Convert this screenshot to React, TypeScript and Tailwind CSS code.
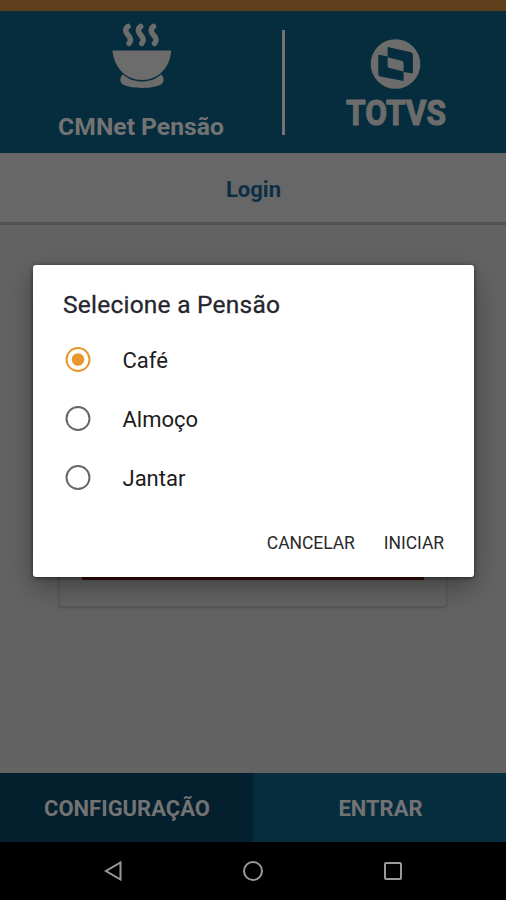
import { useState } from 'react'

const meals = ['Café', 'Almoço', 'Jantar']

const BowlIcon = () => (
  <svg width="60" height="68" viewBox="0 0 60 68" fill="#6c6c6c">
    <g fill="none" stroke="#6c6c6c" strokeWidth="5.500" strokeLinecap="round" strokeLinejoin="round">
      <path d="M16 3.500C12.500 6 13.500 9.500 16 12S19.500 17.500 17 20.500" />
      <path d="M28.700 3.500C25.200 6 26.200 9.500 28.700 12S32.200 17.500 29.700 20.500" />
      <path d="M41.500 3.500C38 6 39 9.500 41.500 12S45 17.500 42.500 20.500" />
    </g>
    <path d="M0.500 27.500H59.200C58 45 46 57 30 57S2 45 0.500 27.500Z" />
    <path d="M11 51.500C17 56.500 23 58.500 30 58.500S43 56.500 49 51.500C52.500 54 52.500 59.500 49 61.500C41 66 19 66 11 61.500C7.500 59.500 7.500 54 11 51.500Z" />
  </svg>
)

const TotvsLogo = () => (
  <svg width="110" height="94" viewBox="0 0 110 94" fill="#6c6c6c" className="overflow-visible">
    <circle cx="54.500" cy="25" r="24.800" />
    <g fill="#062d3e">
      <path d="M46.600 8L70 13.300Q71.900 13.800 71.900 15.800V34.600L62.600 33V24.200Q62.600 22.200 60.600 21.700L46.600 18.300Z" />
      <path d="M37.300 15.800L46.600 17.300V26.500Q46.600 28.500 48.600 29L62.600 32.500V42L39.300 37.500Q37.300 37 37.300 35Z" />
    </g>
    <text
      x="5"
      y="86"
      textLength="100"
      lengthAdjust="spacingAndGlyphs"
      stroke="#6c6c6c"
      strokeWidth="1.200"
      strokeLinejoin="round"
      className="font-[Roboto,sans-serif] text-[35px] leading-none font-bold"
    >
      TOTVS
    </text>
  </svg>
)

const Header = () => (
  <header className="box-content flex h-[142px] border-t-[11px] border-[#5f3f1b] bg-[#062d3e]">
    <div className="flex w-[282px] flex-col items-center pt-[12px]">
      <div className="pl-[2px]">
        <BowlIcon />
      </div>
      <h1 className="mt-[22px] text-[24.700px] leading-7 font-bold">CMNet Pensão</h1>
    </div>
    <div className="mt-[19px] h-[105px] w-[3px] bg-[#737373]" />
    <div className="flex flex-1 justify-center pt-[28px]">
      <TotvsLogo />
    </div>
  </header>
)

const NavBar = () => (
  <nav className="flex h-[58px] items-center bg-black">
    <div className="flex w-full justify-center gap-[112px]">
      <svg width="28" height="28" fill="none" stroke="#999999" strokeWidth="2">
        <path d="M21.500 5.500V22.500L7 14Z" />
      </svg>
      <svg width="28" height="28" fill="none" stroke="#999999" strokeWidth="2">
        <circle cx="14" cy="14" r="9" />
      </svg>
      <svg width="28" height="28" fill="none" stroke="#999999" strokeWidth="2">
        <rect x="6" y="6" width="16" height="16" rx="1" />
      </svg>
    </div>
  </nav>
)

const MealDialog = () => {
  const [selected, setSelected] = useState('Café')

  return (
    <div className="absolute top-[265px] left-[33px] flex h-[312px] w-[441px] flex-col rounded-[3px] bg-white shadow-[0_10px_28px_rgba(0,0,0,0.35),0_1px_4px_rgba(0,0,0,0.5)]">
      <h2 className="pt-[24px] pl-[30px] text-[24.500px] leading-8 font-normal tracking-[0.230px] text-[#26262e] [-webkit-text-stroke:0.300px_#26262e]">
        Selecione a Pensão
      </h2>
      <div className="mt-[9px]">
        {meals.map((meal) => (
          <button
            key={meal}
            onClick={() => setSelected(meal)}
            className="flex h-[59px] w-full items-center pl-[32px] text-[22px] text-[#1c1c1c]"
          >
            <svg width="26" height="26" fill="none" strokeWidth="2">
              <circle cx="13" cy="12.500" r="11.500" stroke={selected === meal ? '#e8962e' : '#666666'} />
              {selected === meal && <circle cx="13" cy="12.500" r="6.300" fill="#e8962e" />}
            </svg>
            <span className="mt-[2px] ml-[31.500px]">{meal}</span>
          </button>
        ))}
      </div>
      <div className="mt-[24px] flex justify-end gap-[29px] pr-[30px] text-[17.500px] leading-6 tracking-[-0.050px] text-[#2a2a2a]">
        <button>CANCELAR</button>
        <button>INICIAR</button>
      </div>
    </div>
  )
}

const App = () => {
  return (
    <div className="relative flex h-[900px] w-[506px] flex-col overflow-hidden bg-[#636363] font-[Roboto,sans-serif] text-[#737373]">
      <Header />
      <div className="flex h-[72px] items-center justify-center border-b-[3px] border-[#525252] bg-[#676767] pt-[4px] pl-[1px] text-[22px] font-bold text-[#0b3046]">
        Login
      </div>
      <main className="flex flex-1 flex-col items-center">
        <div className="mt-[60px] flex h-[322px] w-[388px] flex-col rounded-[3px] border border-[#5a5a5a] bg-[#646464] px-[22px] pt-[270px] shadow-[0_1px_2px_#505050]">
          <div className="h-6 bg-[#3f100b]" />
        </div>
      </main>
      <footer className="flex h-[69px] text-[22px] font-bold">
        <button className="w-1/2 bg-[#041f2d] pt-[2px] pl-[1px]">CONFIGURAÇÃO</button>
        <button className="w-1/2 bg-[#062d3e] pt-[2px] pl-[2px]">ENTRAR</button>
      </footer>
      <NavBar />
      <MealDialog />
    </div>
  )
}

export default App
